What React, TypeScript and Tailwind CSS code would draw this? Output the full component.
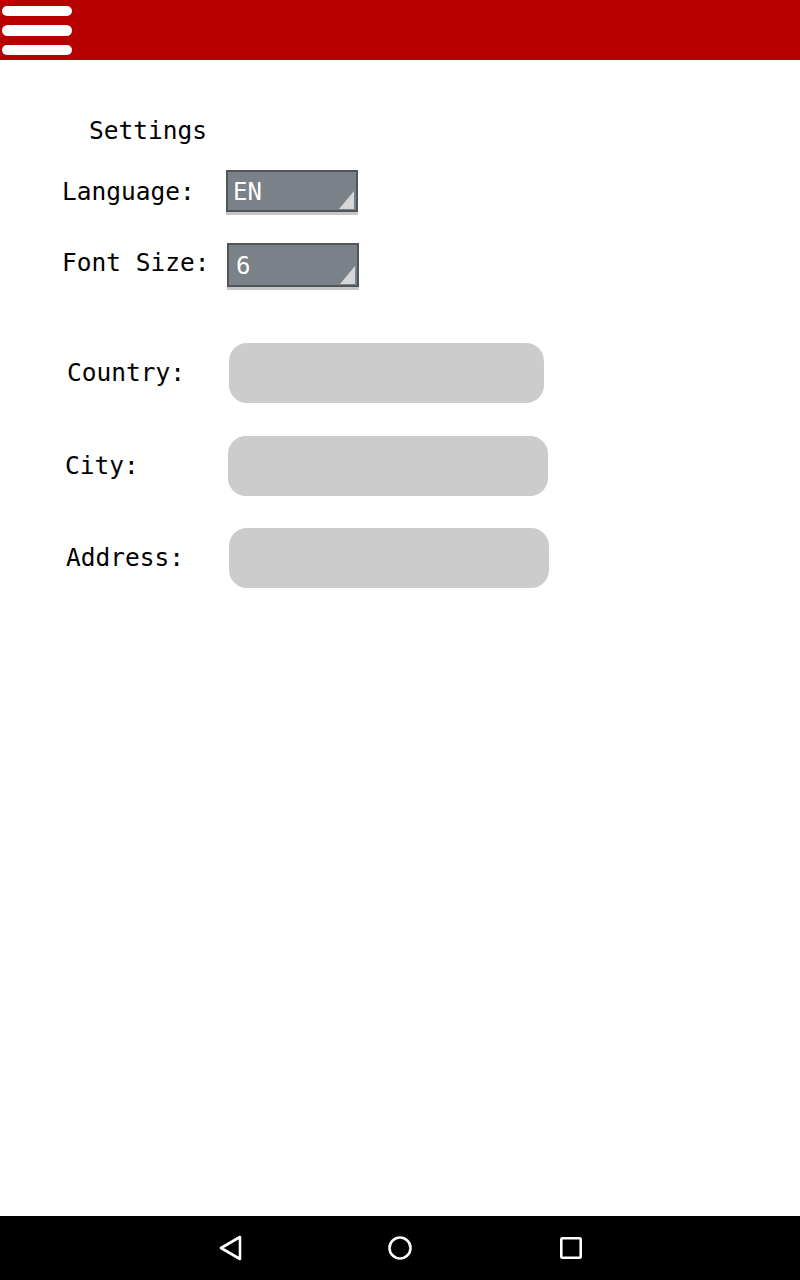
import React from "react";

const mono = { fontFamily: '"DejaVu Sans Mono", "Liberation Mono", monospace' };

function Select({ value, tall }: { value: string; tall?: boolean }) {
  return (
    <div className={tall ? "relative h-[47px] w-[132px]" : "relative h-[45px] w-[132px]"}>
      <div className="absolute inset-x-0 bottom-0 h-[4px] bg-[#c4c6c8]" />
      <div
        className={
          tall
            ? "relative flex h-[44px] w-full items-center border-2 border-[#50555a] bg-[#7b8189] pl-[7px] pt-[2px] text-[24px] text-white"
            : "relative flex h-[42px] w-full items-center border-2 border-[#50555a] bg-[#7b8189] pl-[5px] pt-[2px] text-[24px] text-white"
        }
      >
        {value}
        <svg className="absolute bottom-[1px] right-[1px]" width="16" height="18" viewBox="0 0 16 18">
          <polygon points="15,0 15,18 0,18" fill="#d6d7d8" />
        </svg>
      </div>
    </div>
  );
}

function Field() {
  return <div className="h-[60px] w-[320px] rounded-[18px] bg-[#cccccc]" />;
}

export default function App() {
  return (
    <div className="flex h-[1280px] w-[800px] flex-col bg-white text-black" style={mono}>
      <header className="flex h-[60px] shrink-0 items-start bg-[#b70000]">
        <div className="ml-[2px] mt-[6px] flex flex-col gap-[9px]">
          <div className="h-[10px] w-[70px] rounded-full bg-white" />
          <div className="h-[11px] w-[70px] rounded-full bg-white" />
          <div className="h-[10px] w-[70px] rounded-full bg-white" />
        </div>
      </header>

      <main className="flex-1 text-[24.5px] leading-[30px]">
        <div className="ml-[89px] mt-[56px]">Settings</div>

        <div className="ml-[62px] mt-[24px] flex items-center">
          <div className="w-[164px] pb-[1px]">Language:</div>
          <Select value="EN" />
        </div>

        <div className="ml-[62px] mt-[28px] flex items-center">
          <div className="w-[165px] pb-[8px]">Font Size:</div>
          <Select value="6" tall />
        </div>

        <div className="ml-[67px] mt-[53px] flex items-center">
          <div className="w-[162px]">Country:</div>
          <div className="h-[60px] w-[315px] rounded-[18px] bg-[#cccccc]" />
        </div>

        <div className="ml-[65px] mt-[33px] flex items-center">
          <div className="w-[163px]">City:</div>
          <Field />
        </div>

        <div className="ml-[66px] mt-[32px] flex items-center">
          <div className="w-[163px]">Address:</div>
          <Field />
        </div>
      </main>

      <nav className="flex h-[64px] shrink-0 items-center bg-black">
        <div className="flex w-full items-center">
          <svg className="ml-[218px]" width="26" height="28" viewBox="0 0 26 28">
            <polygon points="22,3 22,25 3,14" fill="none" stroke="white" strokeWidth="2.6" strokeLinejoin="round" />
          </svg>
          <svg className="ml-[142px]" width="28" height="28" viewBox="0 0 28 28">
            <circle cx="14" cy="14" r="10.5" fill="none" stroke="white" strokeWidth="2.6" />
          </svg>
          <svg className="ml-[144px]" width="26" height="26" viewBox="0 0 26 26">
            <rect x="3.3" y="3.3" width="19.4" height="19.4" rx="1" fill="none" stroke="white" strokeWidth="2.6" />
          </svg>
        </div>
      </nav>
    </div>
  );
}
